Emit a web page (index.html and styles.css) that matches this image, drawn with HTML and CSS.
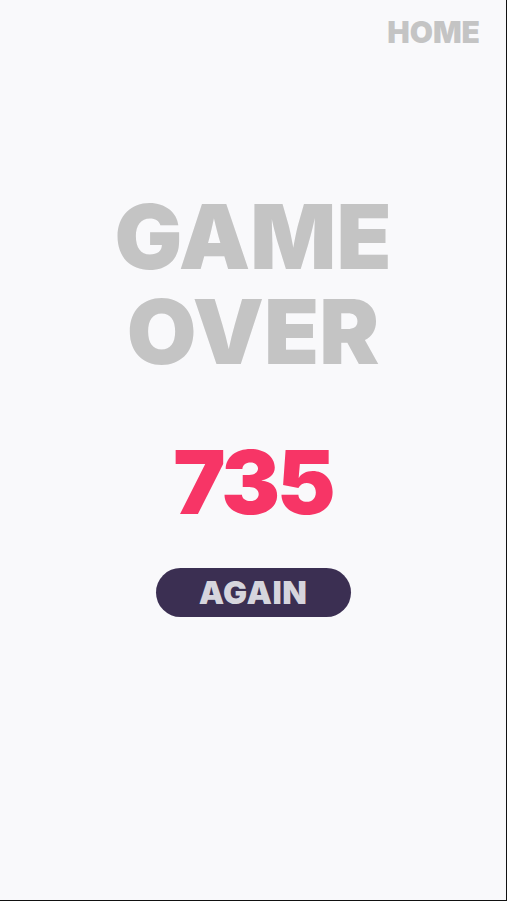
FILE: index.html
```html
<!DOCTYPE html>
<html lang="en">
<head>
    <meta charset="UTF-8">
    <meta name="viewport" content="width=device-width, initial-scale=1.0">
    <title>Game Over</title>
    <link rel="stylesheet" href="styles.css">
</head>
<body>

<div class="screen">
    <div class="top-bar">
        <a class="home-link" href="#">HOME</a>
    </div>

    <div class="game-over">
        <h1 class="title">
            <span class="title-line">GAME</span>
            <span class="title-line">OVER</span>
        </h1>
        <div class="score">735</div>
        <button class="again-btn">AGAIN</button>
    </div>
</div>

</body>
</html>
```

FILE: styles.css
```css
html, body {
    margin: 0;
    padding: 0;
}

body {
    font-family: Inter, 'Liberation Sans', sans-serif;
    background-color: #f9f9fb;
}

.screen {
    box-sizing: border-box;
    height: 901px;
    border-right: 1px solid #111;
    border-bottom: 1px solid #111;
    display: flex;
    flex-direction: column;
}

.top-bar {
    display: flex;
    justify-content: flex-end;
    padding: 14px 26px 0 0;
}

.home-link {
    color: #c4c4c4;
    font-size: 30px;
    font-weight: 900;
    text-decoration: none;
    line-height: 36px;
}

.game-over {
    display: flex;
    flex-direction: column;
    align-items: center;
    padding-top: 139px;
}

.title {
    margin: 0;
    color: #c4c4c4;
    font-size: 90px;
    font-weight: 900;
    text-align: center;
}

.title-line {
    display: block;
    line-height: 95px;
}

.score {
    margin-top: 56px;
    color: #f73566;
    font-size: 88px;
    font-weight: 900;
    line-height: 95px;
    letter-spacing: -3px;
}

.again-btn {
    margin-top: 38px;
    width: 195px;
    height: 49px;
    border: none;
    border-radius: 25px;
    background-color: #3b2f52;
    color: #d6d5dd;
    font-family: inherit;
    font-size: 32px;
    font-weight: 900;
    letter-spacing: 0.5px;
    cursor: pointer;
}
```
